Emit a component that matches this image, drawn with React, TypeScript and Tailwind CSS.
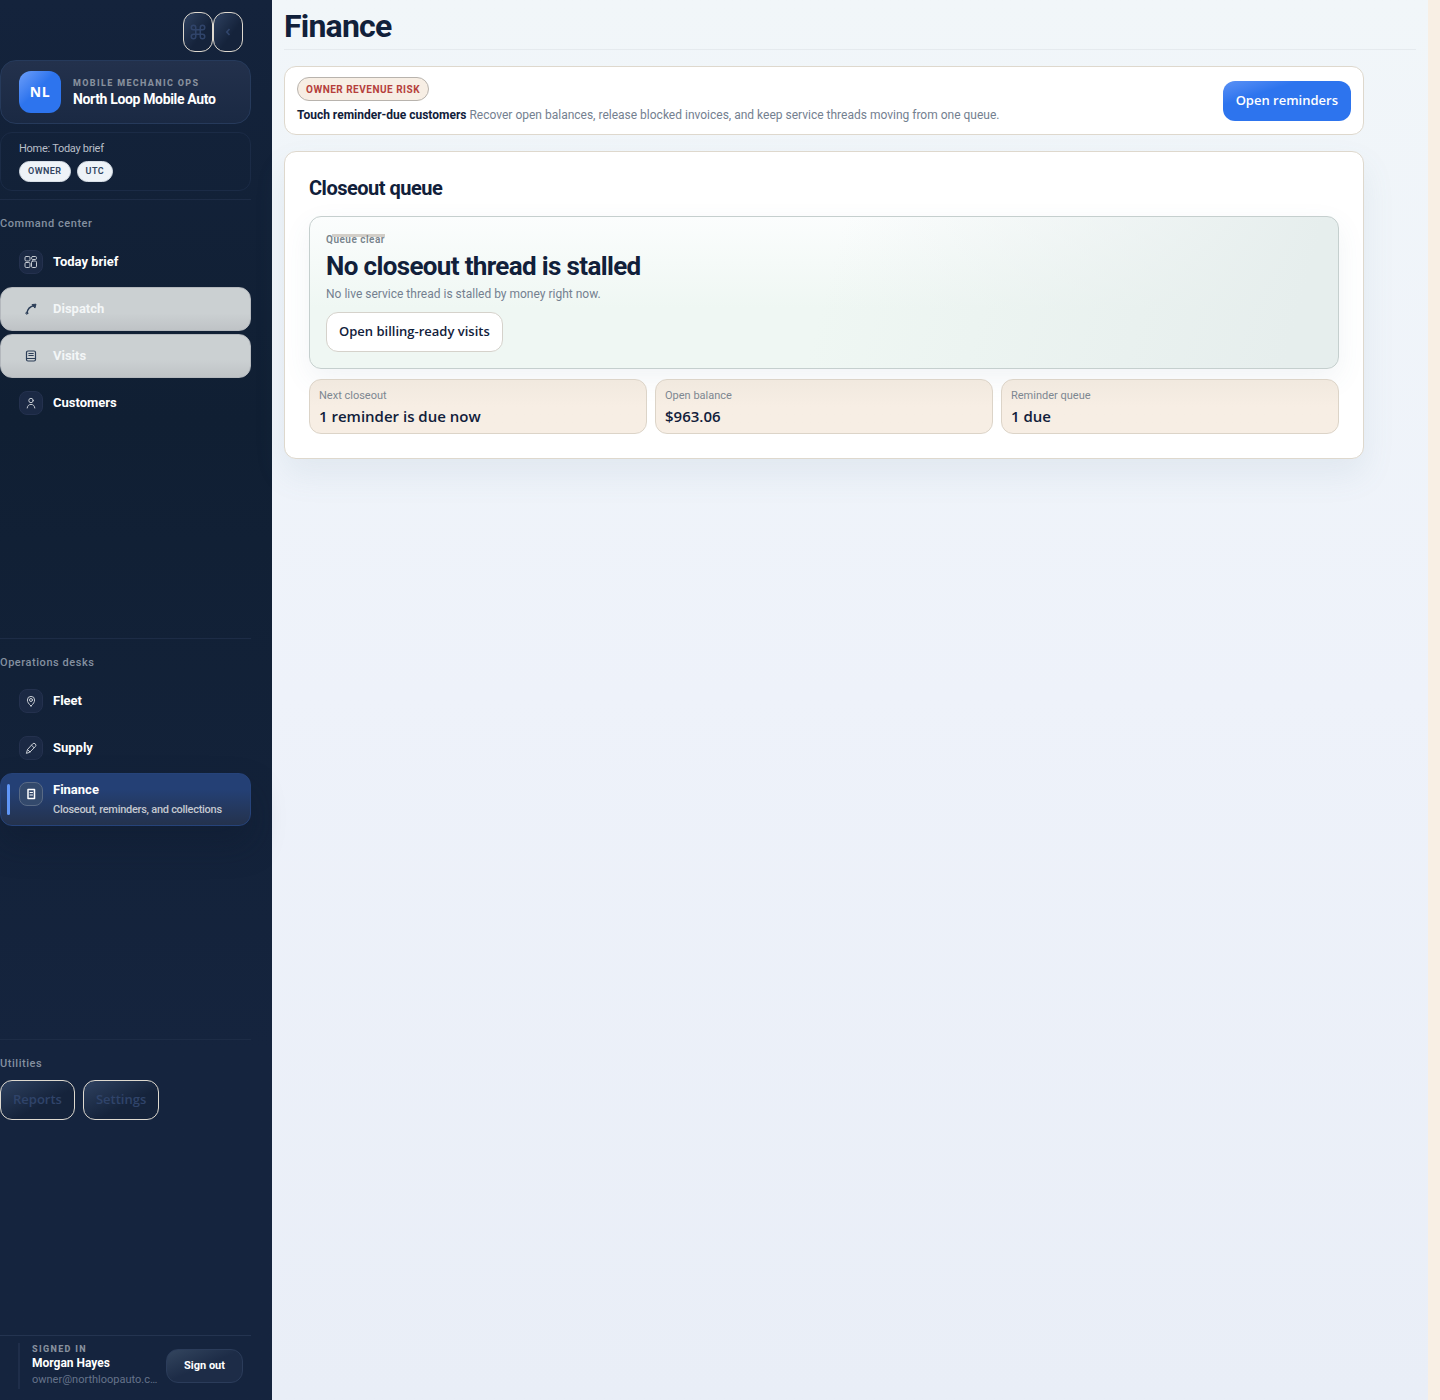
import type { ReactNode } from "react";

interface NavItem {
    label: string;
    icon: ReactNode;
    muted?: boolean;
    active?: boolean;
    detail?: string;
}

const icons = {
    grid: (
        <>
            <rect x="1" y="1.5" width="5" height="4.5" rx="1.2" />
            <rect x="7.500" y="1.5" width="5" height="3" rx="1.2" />
            <rect x="1" y="7.500" width="5" height="5" rx="1.2" />
            <rect x="7.500" y="6" width="5" height="6.500" rx="1.2" />
        </>
    ),
    route: (
        <>
            <path d="M3 11C3.5 7 6 4.5 10 3.5" strokeWidth="1.300" />
            <circle cx="2.800" cy="11.200" r="1" />
            <path d="M8.500 2.500l3.500-.3-1 3.500z" fill="currentColor" />
        </>
    ),
    visits: (
        <>
            <rect x="2.500" y="2" width="9" height="10" rx="1.500" strokeWidth="1.200" />
            <path d="M4.800 4.500h4.500M4.800 6.500h4.500M3 9.500h8" />
        </>
    ),
    person: (
        <>
            <circle cx="7" cy="4.500" r="2.200" />
            <path d="M3.200 12c.3-2.300 1.700-3.600 3.800-3.600s3.500 1.300 3.800 3.600" />
        </>
    ),
    pin: (
        <>
            <path d="M7 12C4.500 9.700 3.400 8 3.400 6a3.600 3.600 0 0 1 7.200 0c0 2-1.100 3.700-3.600 6z" />
            <circle cx="7" cy="6" r="1.500" />
        </>
    ),
    tool: (
        <path d="M2.500 12l1-3.500L8.600 2.900a1.900 1.900 0 0 1 2.700 2.700L6 11zM7.500 4.200l2.500 2.500M3.500 8.500L6 11" />
    ),
    receipt: (
        <>
            <path d="M4 2.500h6.500v9H4z" strokeWidth="1.500" />
            <path d="M6 5.500h2.500M6 8h2.500" />
        </>
    ),
};

const commandItems: NavItem[] = [
    { label: "Today brief", icon: icons.grid },
    { label: "Dispatch", icon: icons.route, muted: true },
    { label: "Visits", icon: icons.visits, muted: true },
    { label: "Customers", icon: icons.person },
];

const deskItems: NavItem[] = [
    { label: "Fleet", icon: icons.pin },
    { label: "Supply", icon: icons.tool },
    { label: "Finance", icon: icons.receipt, active: true, detail: "Closeout, reminders, and collections" },
];

const stats = [
    { label: "Next closeout", value: "1 reminder is due now" },
    { label: "Open balance", value: "$963.06" },
    { label: "Reminder queue", value: "1 due" },
];

function NavLink({ label, icon, muted, active, detail }: NavItem) {
    const tone = muted
        ? "border-[#b4b8bd] bg-linear-to-b from-[#cbd0d2] from-60% to-[#bfc3c6]"
        : active
            ? "border-[#26437a] bg-linear-to-b from-[#244075] from-30% to-[#24324d] shadow-[0_18px_32px_rgba(15,27,45,0.35)]"
            : "border-transparent";
    const tile = muted
        ? "border-transparent text-[#2c3e58]"
        : active
            ? "border-[#596a85] bg-[#33496c] text-white"
            : "border-[#24314e] bg-[#1b2944] text-[#c7ccd3]";

    return (
        <a href="#" className={`relative flex min-h-11 items-start gap-2.5 rounded-xl border px-[18px] ${active ? "pt-2 pb-[7px]" : "pt-[9px]"} ${tone}`}>
            {active && <span className="absolute top-2.5 bottom-2.5 left-1.5 w-[3px] rounded-full bg-[#5f96f8]" />}
            <span className={`flex size-6 shrink-0 items-center justify-center rounded-lg border ${tile}`}>
                <svg viewBox="0 0 14 14" className="size-3.5" fill="none" stroke="currentColor" strokeWidth="1" strokeLinecap="round" strokeLinejoin="round">
                    {icon}
                </svg>
            </span>
            <span className={`flex flex-col text-[13px] font-bold ${muted ? "text-[#f3f6f7]" : "text-white"}`}>
                <span className={active ? "leading-4" : "leading-6"}>{label}</span>
                {detail && <span className="mt-1 text-[11px] leading-4 font-medium tracking-tight whitespace-nowrap text-[#c3c8d0]">{detail}</span>}
            </span>
        </a>
    );
}

function NavSection({ title, children }: { title: string; children: ReactNode }) {
    return (
        <section className="grow border-t border-[#1d2c46] pt-4 last:pb-0.5">
            <h2 className="text-[11px] leading-4 font-medium tracking-wider text-[#8490a0]">{title}</h2>
            {children}
        </section>
    );
}

function Sidebar() {
    const outlined = "h-10 rounded-xl border border-[#ded9cf] bg-linear-to-br from-[#2f4261] to-[#15233b] to-60% font-['Open_Sans',sans-serif] font-semibold text-[#30446a]";

    return (
        <aside className="flex w-[272px] shrink-0 flex-col bg-linear-to-b from-[#14233c] via-[#101f33] via-30% to-[#15243e] to-75% pr-[21px]">
            <div className="flex justify-end pt-3 pr-2">
                <button aria-label="Command menu" className={`w-[30px] ${outlined}`}>
                    <svg viewBox="0 0 24 24" className="mx-auto size-[18px]" fill="none" stroke="currentColor" strokeWidth="2">
                        <path d="M9 9V6a3 3 0 1 0-3 3h12a3 3 0 1 0-3-3v12a3 3 0 1 0 3-3H6a3 3 0 1 0 3 3z" />
                    </svg>
                </button>
                <button aria-label="Collapse sidebar" className={`w-[30px] ${outlined}`}>
                    <svg viewBox="0 0 6 8" className="mx-auto h-2 w-1.5" fill="none" stroke="currentColor" strokeWidth="1.700">
                        <path d="M4.500 1L1.800 4l2.700 3" />
                    </svg>
                </button>
            </div>

            {/* Workspace */}
            <div className="mt-2 flex h-16 items-center gap-3 rounded-2xl border border-[#263a5b] bg-linear-to-b from-[#23314c] to-[#1a2943] px-[18px]">
                <span className="flex size-[42px] shrink-0 items-center justify-center rounded-xl bg-linear-to-br from-[#6c9ef8] to-[#2d74ee] to-45% font-['Open_Sans',sans-serif] text-sm font-bold tracking-wider text-white">NL</span>
                <div className="flex flex-col">
                    <span className="text-[9px] leading-[14px] font-extrabold tracking-[0.15em] whitespace-nowrap text-[#87909d]">MOBILE MECHANIC OPS</span>
                    <strong className="text-sm leading-[18px] font-bold tracking-tight whitespace-nowrap text-white">North Loop Mobile Auto</strong>
                </div>
            </div>

            <div className="mt-2 mb-2 h-[59px] rounded-xl border border-[#1b2b46] px-[18px] pt-2">
                <p className="text-[11px] leading-4 tracking-tight text-[#b9bfc8]">Home: Today brief</p>
                <div className="mt-1 flex gap-1.5 text-[9px] font-semibold tracking-wider text-[#30445f]">
                    <span className="flex h-[21px] items-center rounded-full border border-[#d8dfe7] bg-[#eef3f8] px-2">OWNER</span>
                    <span className="flex h-[21px] items-center rounded-full border border-[#d8dfe7] bg-[#eef3f8] px-2">UTC</span>
                </div>
            </div>

            <nav className="flex grow flex-col">
                <NavSection title="Command center">
                    <div className="mt-2 flex flex-col gap-[3px]">
                        {commandItems.map((item) => <NavLink key={item.label} {...item} />)}
                    </div>
                </NavSection>
                <NavSection title="Operations desks">
                    <div className="mt-2 flex flex-col gap-[3px]">
                        {deskItems.map((item) => <NavLink key={item.label} {...item} />)}
                    </div>
                </NavSection>
                <NavSection title="Utilities">
                    <div className="mt-2 flex gap-2">
                        <button className={`px-3 text-[13px] ${outlined}`}>Reports</button>
                        <button className={`px-3 text-[13px] ${outlined}`}>Settings</button>
                    </div>
                </NavSection>
            </nav>

            {/* Account */}
            <div className="flex h-[65px] items-center justify-between border-t border-[#243450] pr-2 pb-1 pl-[18px]">
                <div className="flex w-[136px] flex-col border-l-2 border-[#1f2e4a] pl-3 whitespace-nowrap">
                    <span className="text-[9px] leading-3 font-extrabold tracking-[0.15em] text-[#87909d]">SIGNED IN</span>
                    <strong className="text-xs leading-4 font-bold text-white">Morgan Hayes</strong>
                    <span className="text-[11px] leading-[18px] text-[#65738a]">owner@northloopauto.c…</span>
                </div>
                <button className="h-[34px] rounded-xl border border-[#2b3c5a] bg-linear-to-br from-[#34465f] to-[#1d2c47] to-50% px-[17px] text-[11px] font-bold whitespace-nowrap text-white">Sign out</button>
            </div>
        </aside>
    );
}

export default function App() {
    return (
        <div className="flex min-h-screen bg-[#f8efe4] font-['Roboto',sans-serif] text-[#11203a]">
            <Sidebar />
            <main className="mr-3 min-w-0 grow bg-linear-to-b from-[#f1f6f9] via-[#eef2fa] via-50% to-[#e9eef7] px-3">
                <header className="flex h-[50px] items-center border-b border-[#e5eaee] pt-0.5">
                    <h1 className="text-[32px] leading-[48px] font-bold tracking-tight">Finance</h1>
                </header>

                <div className="mr-[52px]">
                    {/* Owner callout */}
                    <section className="mt-4 flex items-center justify-between rounded-xl border border-[#ded8cd] bg-white px-3 py-2.5">
                        <div>
                            <span className="flex h-6 w-fit items-center rounded-full border border-[#b8b3ad] bg-[#f7eee4] px-2 text-[10px] font-bold tracking-wider text-[#b5403b]">OWNER REVENUE RISK</span>
                            <p className="mt-[5px] text-xs leading-[18px] text-[#748090]">
                                <strong className="font-bold text-[#11203a]">Touch reminder-due customers</strong> Recover open balances, release blocked invoices, and keep service threads moving from one queue.
                            </p>
                        </div>
                        <button className="h-10 rounded-xl bg-linear-to-br from-[#5a91f5] to-[#2d74ee] to-30% px-[13px] font-['Open_Sans',sans-serif] text-[13px] font-semibold whitespace-nowrap text-white">Open reminders</button>
                    </section>

                    {/* Closeout queue */}
                    <section className="mt-4 rounded-xl border border-[#ded8cd] bg-white p-6 shadow-[0_16px_32px_rgba(100,140,160,0.1)]">
                        <h2 className="text-xl leading-6 font-bold tracking-tight">Closeout queue</h2>
                        <div className="mt-4 rounded-xl border border-[#c5cfce] bg-[linear-gradient(105deg,rgba(230,238,237,0)_50%,#e6eeed_95%),linear-gradient(#fbfdfd,#eff7f3_60%)] px-4 pt-[17px] pb-4 shadow-[0_10px_28px_rgba(80,110,140,0.08)]">
                            <span className="relative block w-fit text-[10px] leading-3 font-semibold tracking-wider text-[#77838c]">
                                <span className="absolute top-0 right-0 left-1.5 h-[3px] bg-[#d2cec8]" />
                                <span className="relative">Queue clear</span>
                            </span>
                            <h3 className="mt-1 text-[26px] leading-8 font-bold tracking-tight">No closeout thread is stalled</h3>
                            <p className="mt-1 text-xs leading-4 text-[#748090]">No live service thread is stalled by money right now.</p>
                            <button className="mt-2.5 h-10 rounded-xl border border-[#d5d2cb] bg-white px-3 font-['Open_Sans',sans-serif] text-[13px] font-semibold">Open billing-ready visits</button>
                        </div>
                        <dl className="mt-2.5 grid grid-cols-3 gap-2">
                            {stats.map((stat) => (
                                <div key={stat.label} className="rounded-xl border border-[#dcd4c8] bg-linear-to-b from-[#f1e9df] to-[#f7eee4] to-50% px-[9px] pt-2 pb-[7px]">
                                    <dt className="text-[11px] leading-4 text-[#7d8791]">{stat.label}</dt>
                                    <dd className="mt-0.5 font-['Open_Sans',sans-serif] text-[15px] leading-5 font-semibold">{stat.value}</dd>
                                </div>
                            ))}
                        </dl>
                    </section>
                </div>
            </main>
        </div>
    );
}
